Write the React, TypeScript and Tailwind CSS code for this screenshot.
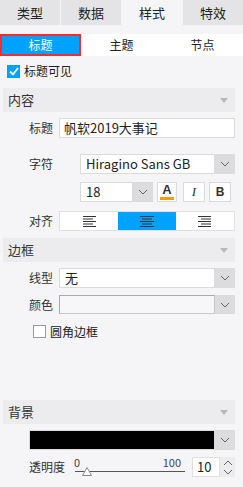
import { ReactNode } from "react";

const font = { fontFamily: '"Noto Sans CJK SC", "Noto Sans", sans-serif' };

function Chevron({ className = "" }: { className?: string }) {
    return (
        <svg width="10" height="6" viewBox="0 0 10 6" className={className}>
            <path d="M1 1 L5 5 L9 1" fill="none" stroke="#666" strokeWidth="1" />
        </svg>
    );
}

function SectionHeader({ title }: { title: string }) {
    return (
        <div className="flex items-center justify-between h-[24px] bg-[#ececee] pl-[5px] pr-[7px] text-[13px] text-[#333]">
            <span>{title}</span>
            <svg width="8" height="5" viewBox="0 0 8 5">
                <path d="M0 0 L8 0 L4 5 Z" fill="#b8b8b8" />
            </svg>
        </div>
    );
}

function Label({ children }: { children: ReactNode }) {
    return <div className="w-[50px] shrink-0 text-right text-[12px] text-[#333] mr-[6px]">{children}</div>;
}

function SelectBox({ value, className = "", dark = false }: { value?: ReactNode; className?: string; dark?: boolean }) {
    return (
        <div className={`flex h-[20px] ${className}`}>
            <div className={`flex-1 flex items-center border border-[#dadada] px-[5px] text-[13px] text-[#222] ${dark ? "bg-black border-[#bbb]" : "bg-white"}`}>
                {value}
            </div>
            <div className="w-[20px] bg-[#dcdcde] flex items-center justify-center">
                <Chevron />
            </div>
        </div>
    );
}

function AlignIcon({ widths }: { widths: [number, number][] }) {
    return (
        <svg width="16" height="11" viewBox="0 0 16 11">
            {widths.map(([x, w], i) => (
                <rect key={i} x={x} y={i * 2.5} width={w} height="1" fill="#333" />
            ))}
        </svg>
    );
}

export default function App() {
    const tabs = ["类型", "数据", "样式", "特效"];
    return (
        <div className="w-[243px] h-[487px] bg-[#f5f5f7] overflow-hidden" style={font}>
            <div className="grid grid-cols-4 gap-[1px] h-[25px] bg-[#f5f5f7]">
                {tabs.map((t, i) => (
                    <div
                        key={t}
                        className={`flex items-center justify-center text-[13px] text-[#222] ${i === 2 ? "bg-[#f5f5f7]" : "bg-[#e4e4e6]"}`}
                    >
                        {t}
                    </div>
                ))}
            </div>

            <div className="mt-[9px] grid grid-cols-3 h-[22px] bg-white text-[12px] text-[#222]">
                <div className="flex items-center justify-center bg-[#00a2ff] text-white border-2 border-[#ff2a2a]">标题</div>
                <div className="flex items-center justify-center">主题</div>
                <div className="flex items-center justify-center">节点</div>
            </div>

            <div className="flex items-center h-[18px] mt-[6px] pl-[7px] text-[12px] text-[#222]">
                <div className="w-[13px] h-[13px] bg-[#00a2ff] flex items-center justify-center mr-[4px]">
                    <svg width="10" height="9" viewBox="0 0 10 9">
                        <path d="M1 4.5 L4 7.5 L9 1" fill="none" stroke="white" strokeWidth="1.8" />
                    </svg>
                </div>
                标题可见
            </div>

            <div className="pl-[3px] pr-[8px] mt-[8px]">
                <SectionHeader title="内容" />

                <div className="flex items-center mt-[6px] h-[20px]">
                    <Label>标题</Label>
                    <div className="flex-1 h-[20px] bg-white border border-[#dadada] flex items-center px-[4px] text-[13px] text-[#222]">
                        帆软2019大事记
                    </div>
                </div>

                <div className="flex items-center mt-[16px] h-[20px]">
                    <Label>字符</Label>
                    <SelectBox className="flex-1 ml-[21px]" value="Hiragino Sans GB" />
                </div>

                <div className="flex items-center mt-[8px] h-[20px] pl-[77px] gap-[4px]">
                    <SelectBox className="w-[73px]" value="18" />
                    <div className="w-[20px] h-[20px] bg-white border border-[#dadada] flex flex-col items-center justify-center">
                        <span className="text-[13px] font-bold leading-[12px] text-[#333]" style={{ fontFamily: '"Liberation Sans", sans-serif' }}>A</span>
                        <div className="w-[14px] h-[3px] bg-[#ff9a00] mt-[1px]" />
                    </div>
                    <div className="w-[22px] h-[20px] ml-[2px] bg-white border border-[#dadada] flex items-center justify-center text-[13px] italic text-[#333]" style={{ fontFamily: '"Liberation Serif", serif' }}>
                        I
                    </div>
                    <div className="w-[22px] h-[20px] bg-white border border-[#dadada] flex items-center justify-center text-[12px] font-bold text-[#333]" style={{ fontFamily: '"Liberation Sans", sans-serif' }}>
                        B
                    </div>
                </div>

                <div className="flex items-center mt-[9px] h-[20px]">
                    <Label>对齐</Label>
                    <div className="flex-1 grid grid-cols-3 h-[20px] bg-white border border-[#e0e0e0]">
                        <div className="flex items-center justify-center">
                            <AlignIcon widths={[[2, 13], [2, 10], [2, 13], [2, 10], [2, 13]]} />
                        </div>
                        <div className="flex items-center justify-center bg-[#00a2ff]">
                            <AlignIcon widths={[[1, 14], [3, 10], [1, 14], [3, 10], [1, 14]]} />
                        </div>
                        <div className="flex items-center justify-center">
                            <AlignIcon widths={[[1, 13], [4, 10], [1, 13], [4, 10], [1, 13]]} />
                        </div>
                    </div>
                </div>

                <div className="mt-[7px]">
                    <SectionHeader title="边框" />
                </div>

                <div className="flex items-center mt-[6px] h-[20px]">
                    <Label>线型</Label>
                    <SelectBox className="flex-1" value="无" />
                </div>

                <div className="flex items-center mt-[7px] h-[19px]">
                    <Label>颜色</Label>
                    <div className="flex flex-1 h-[19px]">
                        <div className="flex-1 bg-[#f7f7f9] border border-[#c8c8c8] border-t-[#aaa] border-l-[#aaa]" />
                        <div className="w-[20px] bg-[#dcdcde] flex items-center justify-center">
                            <Chevron />
                        </div>
                    </div>
                </div>

                <div className="flex items-center mt-[11px] h-[13px] pl-[30px] text-[12px] text-[#222]">
                    <div className="w-[13px] h-[13px] bg-white border border-[#999] mr-[4px]" />
                    圆角边框
                </div>

                <div className="mt-[62px]">
                    <SectionHeader title="背景" />
                </div>

                <div className="flex items-center mt-[7px] h-[18px] pl-[26px]">
                    <SelectBox className="flex-1 h-[18px]" dark />
                </div>

                <div className="flex items-center mt-[8px] h-[20px]">
                    <div className="w-[26px] shrink-0" />
                    <div className="text-[12px] text-[#333] w-[45px] shrink-0">透明度</div>
                    <div className="relative w-[111px] h-[20px]">
                        <span className="absolute left-0 top-[-3px] text-[11px] text-[#444]">0</span>
                        <span className="absolute right-[4px] top-[-3px] text-[11px] text-[#444]">100</span>
                        <div className="absolute left-[1px] right-0 top-[14px] h-px bg-[#555]" />
                        <svg className="absolute left-[8px] top-[10px]" width="10" height="9" viewBox="0 0 10 9">
                            <path d="M5 0.5 L9.5 8.5 L0.5 8.5 Z" fill="white" stroke="#888" strokeWidth="1" />
                        </svg>
                    </div>
                    <div className="ml-[7px] flex flex-1 h-[20px]">
                        <div className="flex-1 bg-white border border-[#e0e0e0] flex items-center px-[4px] text-[13px] text-[#222]">10</div>
                        <div className="w-[15px] bg-[#ececee] flex flex-col items-center justify-center gap-[3px]">
                            <Chevron className="rotate-180" />
                            <Chevron />
                        </div>
                    </div>
                </div>
            </div>
        </div>
    );
}
